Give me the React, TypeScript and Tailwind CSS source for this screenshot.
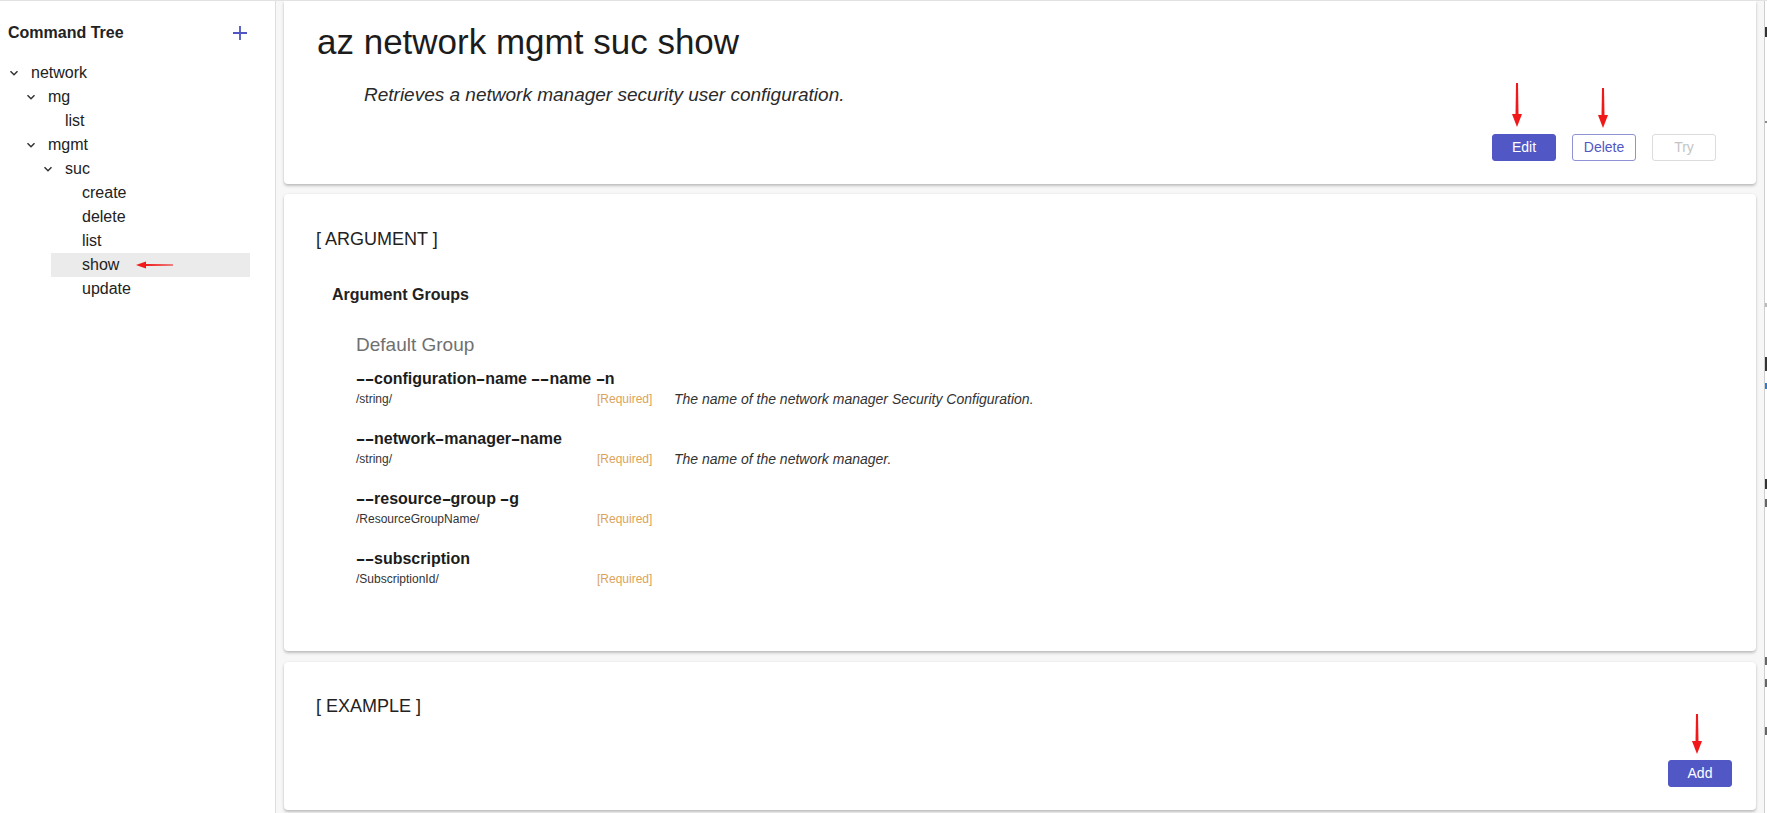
import React from "react";

const FONT = { fontFamily: '"Liberation Sans", Arial, sans-serif' };

type Node = { label: string; depth: number; open?: boolean; selected?: boolean };

const TREE: Node[] = [
  { label: "network", depth: 0, open: true },
  { label: "mg", depth: 1, open: true },
  { label: "list", depth: 2 },
  { label: "mgmt", depth: 1, open: true },
  { label: "suc", depth: 2, open: true },
  { label: "create", depth: 3 },
  { label: "delete", depth: 3 },
  { label: "list", depth: 3 },
  { label: "show", depth: 3, selected: true },
  { label: "update", depth: 3 },
];

const ARGS = [
  { name: "--configuration-name --name -n", type: "/string/", desc: "The name of the network manager Security Configuration." },
  { name: "--network-manager-name", type: "/string/", desc: "The name of the network manager." },
  { name: "--resource-group -g", type: "/ResourceGroupName/", desc: "" },
  { name: "--subscription", type: "/SubscriptionId/", desc: "" },
];

function Chevron() {
  return (
    <svg width="10" height="10" viewBox="0 0 10 10" className="shrink-0">
      <path d="M1.5 3.2 L5 6.7 L8.5 3.2" fill="none" stroke="#333" strokeWidth="1.5" />
    </svg>
  );
}

// hyphens in the original font are long, almost en-dash wide
function ArgName({ text }: { text: string }) {
  const parts = text.split("-");
  return (
    <>
      {parts.map((p, i) => (
        <React.Fragment key={i}>
          {i > 0 && <span className="inline-block w-[9px] text-center scale-x-[1.8]">-</span>}
          {p}
        </React.Fragment>
      ))}
    </>
  );
}

// red annotation arrow pointing down
function DownArrow({ left, top, h }: { left: number; top: number; h: number }) {
  return (
    <svg
      className="absolute pointer-events-none"
      style={{ left: left - 6, top }}
      width="12"
      height={h}
      viewBox={`0 0 12 ${h}`}
    >
      <polygon points={`5,0 7,0 7.5,${h - 12} 4.5,${h - 12}`} fill="#f01818" />
      <polygon points={`1,${h - 13} 11,${h - 13} 6,${h}`} fill="#f01818" />
    </svg>
  );
}

function Sidebar() {
  return (
    <div className="w-[276px] shrink-0 border-r border-[#dedede] flex flex-col bg-white">
      <div className="h-[60px] flex items-center justify-between pl-2 pr-[28px] pt-[4px]">
        <span className="text-[16px] font-bold text-[#222]">Command Tree</span>
        <svg width="14" height="14" viewBox="0 0 14 14">
          <path d="M7 0 V14 M0 7 H14" stroke="#4f55c2" strokeWidth="1.8" />
        </svg>
      </div>
      <div className="flex flex-col pl-[8px] pr-[25px]">
        {TREE.map((n, i) =>
          n.selected ? (
            <div key={i} className="h-[24px] ml-[43px] pl-[31px] flex items-center text-[16px] text-[#222] bg-[#ebebeb]">
              show
              <svg className="ml-[17px]" width="37" height="8" viewBox="0 0 37 8">
                <polygon points="0,4 10,0.6 10,7.4" fill="#f01818" />
                <polygon points="9,3 37,3.5 37,4.5 9,5" fill="#f01818" />
              </svg>
            </div>
          ) : (
            <div
              key={i}
              className="h-[24px] flex items-center text-[16px] text-[#222]"
              style={{ paddingLeft: n.depth * 17 }}
            >
              <span className="w-[11px] flex justify-center">{n.open ? <Chevron /> : null}</span>
              <span className="ml-[12px]">{n.label}</span>
            </div>
          )
        )}
      </div>
    </div>
  );
}

function Btn({ label, kind }: { label: string; kind: "solid" | "outline" | "disabled" }) {
  const cls =
    kind === "solid"
      ? "bg-[#5157c4] text-white border-[#5157c4]"
      : kind === "outline"
      ? "bg-white text-[#5157c4] border-[#8f93d6]"
      : "bg-white text-[#c4c4c4] border-[#dcdcdc]";
  return (
    <button className={`w-[64px] h-[27px] rounded-[3px] border text-[14px] flex items-center justify-center ${cls}`}>
      {label}
    </button>
  );
}

function Card({ children, className }: { children: React.ReactNode; className?: string }) {
  return (
    <div className={`bg-white rounded-[4px] shadow-[0_2px_3px_rgba(0,0,0,0.22),0_0_2px_rgba(0,0,0,0.08)] ${className ?? ""}`}>
      {children}
    </div>
  );
}

export default function App() {
  return (
    <div className="relative w-[1767px] h-[813px] overflow-hidden bg-white flex border-t border-[#e2e2e2]" style={FONT}>
      <Sidebar />
      <div className="flex-1 flex flex-col pl-[8px] pr-[8px] bg-[#f7f7f7]">
        <Card className="pt-[21px] pl-[33px] pr-[40px] pb-[23px] rounded-t-none">
          <h1 className="text-[35px] leading-[40px] font-medium text-[#1c1c1c]">az network mgmt suc show</h1>
          <p className="mt-[20px] pl-[47px] text-[19px] leading-[26px] italic text-[#2a2a2a]">
            Retrieves a network manager security user configuration.
          </p>
          <div className="mt-[26px] flex justify-end gap-4">
            <Btn label="Edit" kind="solid" />
            <Btn label="Delete" kind="outline" />
            <Btn label="Try" kind="disabled" />
          </div>
        </Card>

        <Card className="mt-[10px] pt-[33px] pl-[32px] pb-[64px]">
          <div className="text-[18px] leading-[24px] font-light text-[#222]">[ ARGUMENT ]</div>
          <div className="mt-[33px] ml-[16px] text-[16px] leading-[22px] font-bold text-[#222]">Argument Groups</div>
          <div className="ml-[40px]">
            <div className="mt-[27px] text-[19px] leading-[24px] text-[#707070] font-light">Default Group</div>
            <div className="mt-[12px] flex flex-col gap-[22px]">
              {ARGS.map((a) => (
                <div key={a.name}>
                  <div className="text-[16px] leading-[20px] font-bold text-[#1c1c1c]">
                    <ArgName text={a.name} />
                  </div>
                  <div className="mt-[2px] flex items-center h-[16px]">
                    <span className="w-[241px] text-[12px] text-[#333]">{a.type}</span>
                    <span className="w-[77px] text-[12px] text-[#dca35a]">[Required]</span>
                    <span className="text-[14px] italic text-[#333]">{a.desc}</span>
                  </div>
                </div>
              ))}
            </div>
          </div>
        </Card>

        <Card className="mt-[11px] pt-[32px] pl-[32px] pr-[24px] pb-[23px]">
          <div className="text-[18px] leading-[24px] font-light text-[#222]">[ EXAMPLE ]</div>
          <div className="mt-[42px] flex justify-end">
            <Btn label="Add" kind="solid" />
          </div>
        </Card>
      </div>
      <div className="w-[3px] shrink-0 border-l border-[#cfcfcf] bg-white flex flex-col">
        <div className="mt-[26px] h-[10px] w-[2px] bg-[#333]" />
        <div className="mt-[84px] h-[2px] w-[2px] bg-[#888]" />
        <div className="mt-[180px] h-[4px] w-[2px] bg-[#bbb]" />
        <div className="mt-[50px] h-[14px] w-[2px] bg-[#333]" />
        <div className="mt-[12px] h-[6px] w-[2px] bg-[#2a7fd0]" />
        <div className="mt-[90px] h-[10px] w-[2px] bg-[#333]" />
        <div className="mt-[10px] h-[8px] w-[2px] bg-[#666]" />
        <div className="mt-[150px] h-[8px] w-[2px] bg-[#666]" />
        <div className="mt-[14px] h-[8px] w-[2px] bg-[#666]" />
        <div className="mt-[40px] h-[8px] w-[2px] bg-[#666]" />
      </div>

      <DownArrow left={1517} top={82} h={44} />
      <DownArrow left={1603} top={87} h={40} />
      <DownArrow left={1697} top={713} h={40} />
    </div>
  );
}
